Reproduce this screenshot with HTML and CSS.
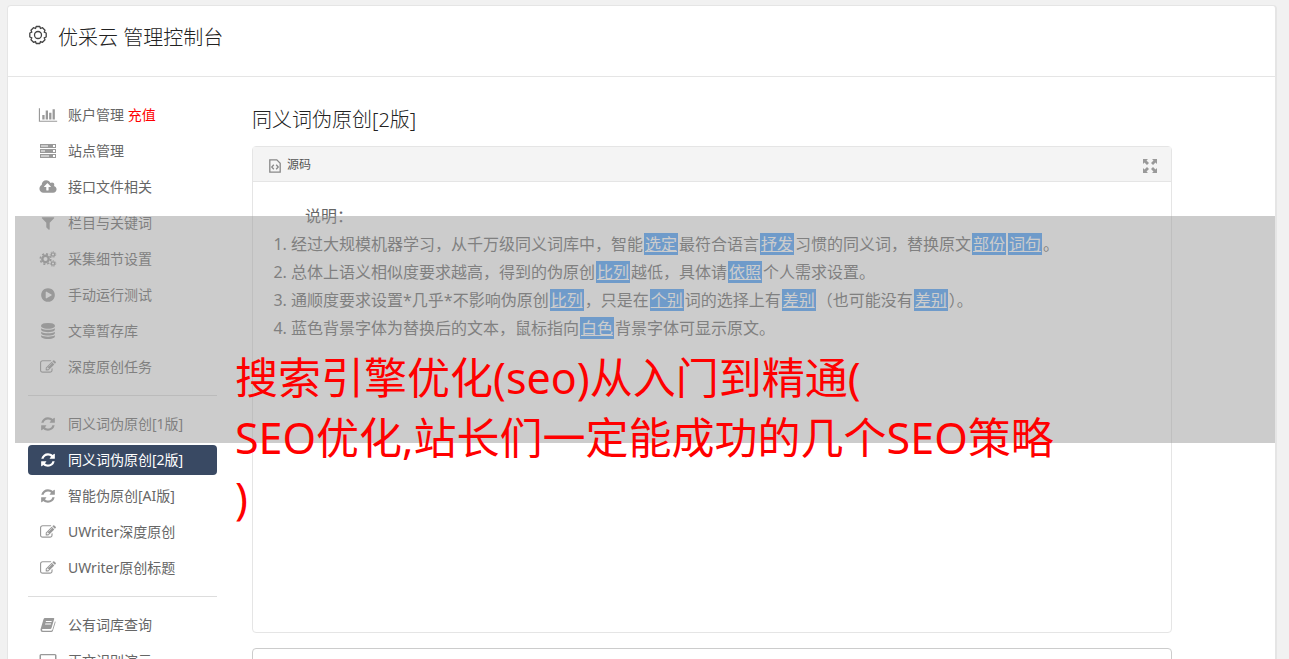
FILE: index.html
```html
<!DOCTYPE html>
<html lang="zh-CN">
<head>
  <meta charset="UTF-8">
  <meta name="viewport" content="width=device-width, initial-scale=1.0">
  <title>优采云 管理控制台</title>
  <link rel="stylesheet" href="styles.css">
</head>
<body>
  <svg class="sprite" aria-hidden="true">
    <symbol id="i-refresh" viewBox="0 0 1792 1792"><path d="M1639 1056q0 5-1 7-64 268-268 434.5t-478 166.5q-146 0-282.5-55t-243.5-157l-129 129q-19 19-45 19t-45-19-19-45v-448q0-26 19-45t45-19h448q26 0 45 19t19 45-19 45l-137 137q71 66 161 102t187 36q134 0 250-65t186-179q11-17 53-117 8-23 30-23h192q13 0 22.5 9.5t9.5 22.5zm25-800v448q0 26-19 45t-45 19h-448q-26 0-45-19t-19-45 19-45l138-138q-148-137-349-137-134 0-250 65t-186 179q-11 17-53 117-8 23-30 23h-199q-13 0-22.5-9.5t-9.5-22.5v-7q65-268 270-434.5t480-166.5q146 0 284 55.5t245 156.5l130-129q19-19 45-19t45 19 19 45z"/></symbol>
    <symbol id="i-edit" viewBox="0 0 1792 1792"><path d="M888 1184l116-116-152-152-116 116v56h96v96h56zm440-720q-16-16-33 1l-350 350q-17 17-1 33t33-1l350-350q17-17 1-33zm80 594v190q0 119-84.500 203.500t-203.500 84.500h-832q-119 0-203.500-84.500t-84.500-203.500v-832q0-119 84.500-203.500t203.500-84.500h832q63 0 117 25 15 7 18 23 3 17-9 29l-49 49q-14 14-32 8-23-6-45-6h-832q-66 0-113 47t-47 113v832q0 66 47 113t113 47h832q66 0 113-47t47-113v-126q0-13 9-22l64-64q15-15 35-7t20 29zm-96-738l288 288-672 672h-288v-288zm444 132l-92 92-288-288 92-92q28-28 68-28t68 28l152 152q28 28 28 68t-28 68z"/></symbol>
  </svg>

  <div class="card">
    <header class="card-header">
      <svg class="gear" viewBox="0 0 20 20"><path d="M8.200 1.500h3.600l.7 2 2-.8 2.500 2.500-.8 2 2 .8v4l-2 .8.800 2-2.500 2.500-2-.8-.7 2H8.200l-.7-2-2 .8L3 14.800l.8-2-2-.8V8l2-.8-.8-2 2.500-2.500 2 .8z"/><circle cx="10" cy="10" r="3.500"/></svg>
      <h1>优采云 管理控制台</h1>
    </header>

    <div class="layout">
      <nav class="sidebar">
        <a href="#"><svg class="icon wide" viewBox="0 0 2048 1792"><path d="M640 896v512h-256v-512h256zm384-512v1024h-256v-1024h256zm1024 1152v128h-2048v-1536h128v1408h1920zm-640-896v768h-256v-768h256zm384-384v1152h-256v-1152h256z"/></svg><span>账户管理 <em>充值</em></span></a>
        <a href="#"><svg class="icon wide" viewBox="0 0 18 16"><path fill-rule="evenodd" d="M1 1h16v4H1zM2 2.500v1h7v-1zM14 2v2h2V2zM1 6h16v4H1zM2 7.500v1h4v-1zM14 7v2h2V7zM1 11h16v4H1zM2 12.500v1h8v-1zM14 12v2h2v-2z"/></svg><span>站点管理</span></a>
        <a href="#"><svg class="icon wide" viewBox="-64 0 1920 1792"><path d="M1216 864q0-14-9-23l-352-352q-9-9-23-9t-23 9l-351 351q-10 12-10 24 0 14 9 23t23 9h224v352q0 13 9.500 22.500t22.500 9.500h192q13 0 22.500-9.500t9.500-22.500v-352h224q13 0 22.500-9.500t9.500-22.500zm640 288q0 159-112.500 271.500t-271.500 112.500h-1088q-185 0-316.500-131.500t-131.500-316.500q0-130 70-240t188-165q-2-30-2-43 0-212 150-362t362-150q156 0 285.500 87t188.500 231q71-62 166-62 106 0 181 75t75 181q0 76-41 138 130 31 213.500 135.500t83.500 238.500z"/></svg><span>接口文件相关</span></a>
        <a href="#"><svg class="icon" viewBox="0 0 1792 1792"><path d="M1595 295q17 41-14 70l-493 493v742q0 42-39 59-13 5-25 5-27 0-45-19l-256-256q-19-19-19-45v-486l-493-493q-31-29-14-70 17-39 59-39h1280q42 0 59 39z"/></svg><span>栏目与关键词</span></a>
        <a href="#"><svg class="icon wide" viewBox="0 0 18 16"><g class="cog"><circle cx="6.500" cy="8" r="3.200" stroke-width="2.400"/><circle cx="6.500" cy="8" r="5.200" stroke-width="1.600" stroke-dasharray="2.040 2.040"/><circle cx="14" cy="3.500" r="1.700" stroke-width="1.300"/><circle cx="14" cy="3.500" r="2.800" stroke-width="1" stroke-dasharray="1.250 1.260"/><circle cx="14" cy="12.500" r="1.700" stroke-width="1.300"/><circle cx="14" cy="12.500" r="2.800" stroke-width="1" stroke-dasharray="1.250 1.260"/></g></svg><span>采集细节设置</span></a>
        <a href="#"><svg class="icon" viewBox="0 0 1792 1792"><path d="M896 128q209 0 385.500 103t279.500 279.500 103 385.500-103 385.500-279.500 279.500-385.500 103-385.500-103-279.500-279.500-103-385.500 103-385.500 279.500-279.500 385.500-103zm384 823q32-18 32-55t-32-55l-544-320q-31-19-64-1-32 19-32 56v640q0 37 32 56 16 8 32 8 17 0 32-9z"/></svg><span>手动运行测试</span></a>
        <a href="#"><svg class="icon" viewBox="0 0 1792 1792"><path d="M896 768q237 0 443-43t325-127v170q0 69-103 128t-280 93.500-385 34.500-385-34.500-280-93.500-103-128v-170q119 84 325 127t443 43zm0 768q237 0 443-43t325-127v170q0 69-103 128t-280 93.500-385 34.500-385-34.500-280-93.500-103-128v-170q119 84 325 127t443 43zm0-384q237 0 443-43t325-127v170q0 69-103 128t-280 93.500-385 34.500-385-34.500-280-93.500-103-128v-170q119 84 325 127t443 43zm0-1152q208 0 385 34.500t280 93.500 103 128v128q0 69-103 128t-280 93.500-385 34.500-385-34.500-280-93.500-103-128v-128q0-69 103-128t280-93.500 385-34.500z"/></svg><span>文章暂存库</span></a>
        <a href="#"><svg class="icon"><use href="#i-edit"/></svg><span>深度原创任务</span></a>
        <hr>
        <a href="#"><svg class="icon"><use href="#i-refresh"/></svg><span>同义词伪原创[1版]</span></a>
        <a href="#" class="active"><svg class="icon"><use href="#i-refresh"/></svg><span>同义词伪原创[2版]</span></a>
        <a href="#"><svg class="icon"><use href="#i-refresh"/></svg><span>智能伪原创[AI版]</span></a>
        <a href="#"><svg class="icon"><use href="#i-edit"/></svg><span>UWriter深度原创</span></a>
        <a href="#"><svg class="icon"><use href="#i-edit"/></svg><span>UWriter原创标题</span></a>
        <hr>
        <a href="#"><svg class="icon" viewBox="0 0 16 16"><path fill-rule="evenodd" d="M5 1h8.500q1 0 .7 1l-2.700 9q-.3 1-1.300 1H2.800q-1 0-.8 1 .1.700 1 .7h8q1 0 1.400-1L15 4.200q.8.400.5 1.300l-2.600 8.300q-.4 1.200-1.600 1.200H2.600Q.5 15 .5 12.800q0-.6.200-1L3.500 2.200Q3.900 1 5 1zM6 4l-.3 1h5.800l.3-1zM5.300 6.500l-.3 1h5.800l.3-1z"/></svg><span>公有词库查询</span></a>
        <a href="#"><svg class="icon wide" viewBox="0 0 18 16"><path fill-rule="evenodd" d="M2 1h14q1.500 0 1.500 1.500v9Q17.500 13 16 13h-5v1.500h1.500v1h-7v-1H7V13H2Q.5 13 .5 11.500v-9Q.5 1 2 1zM2 2.200v8h14v-8z"/></svg><span>正文识别演示</span></a>
      </nav>

      <main class="content">
        <h2>同义词伪原创[2版]</h2>
        <section class="editor">
          <div class="toolbar">
            <button type="button" class="source">
              <svg viewBox="0 0 12 14"><path d="M.8.800h7l3.400 3.400v9H.8z"/><path d="M4.800 5.800L2.800 8l2 2.200M7.200 5.800l2 2.200-2 2.200"/></svg>
              源码
            </button>
            <button type="button" class="fullscreen" aria-label="全屏">
              <svg viewBox="0 0 14 14"><path d="M0 0h5L3.500 1.500 6 4 4 6 1.500 3.500 0 5zM14 0v5l-1.500-1.500L10 6 8 4l2.500-2.500L9 0zM0 14V9l1.500 1.500L4 8l2 2-2.500 2.500L5 14zM14 14H9l1.500-1.500L8 10l2-2 2.500 2.500L14 9z"/></svg>
            </button>
          </div>
          <div class="editor-body">
            <p>说明：</p>
            <ol>
              <li>经过大规模机器学习，从千万级同义词库中，智能<a href="#">选定</a>最符合语言<a href="#">抒发</a>习惯的同义词，替换原文<a href="#">部份</a><a href="#">词句</a>。</li>
              <li>总体上语义相似度要求越高，得到的伪原创<a href="#">比列</a>越低，具体请<a href="#">依照</a>个人需求设置。</li>
              <li>通顺度要求设置*几乎*不影响伪原创<a href="#">比列</a>，只是在<a href="#">个别</a>词的选择上有<a href="#">差别</a>（也可能没有<a href="#">差别</a>）。</li>
              <li>蓝色背景字体为替换后的文本，鼠标指向<a href="#">白色</a>背景字体可显示原文。</li>
            </ol>
          </div>
        </section>
        <textarea class="output" aria-label="原文"></textarea>
      </main>
    </div>
  </div>

  <div class="banner">
    <p>搜索引擎优化(seo)从入门到精通(<br>SEO优化,站长们一定能成功的几个SEO策略<br>)</p>
  </div>
</body>
</html>
```
FILE: styles.css
```css
* {
  box-sizing: border-box;
}
body {
  margin: 0;
  padding: 5px 12px 0 7px;
  height: 100vh;
  overflow: hidden;
  position: relative;
  background-color: #f1f1f1;
  color: #666;
  font-family: "Noto Sans", "Noto Sans CJK SC", sans-serif;
  font-size: 14px;
}
h1, h2, p, ol {
  margin: 0;
  padding: 0;
}
h1, h2 {
  color: #222;
  font-size: 20px;
  font-weight: 300;
  line-height: 30px;
}
button {
  border: none;
  background: none;
  padding: 0;
  cursor: pointer;
}
.sprite {
  display: none;
}
.card {
  background-color: #fff;
  border: 1px solid #e5e5e5;
  border-right-width: 2px;
  border-radius: 4px;
  min-height: 800px;
}
.card-header {
  display: flex;
  gap: 10px;
  height: 71px;
  padding: 17px 20px;
  border-bottom: 1px solid #e5e5e5;
}
.gear {
  width: 20px;
  height: 20px;
  margin-top: 2px;
  fill: none;
  stroke: #444;
  stroke-width: 1.3;
  stroke-linejoin: round;
}
.layout {
  display: flex;
  gap: 35px;
  padding: 23px 20px;
}

/* sidebar */
.sidebar {
  display: flex;
  flex-direction: column;
  flex: 0 0 189px;
  gap: 6px;
}
.sidebar a {
  display: flex;
  align-items: center;
  gap: 10px;
  height: 30px;
  padding-left: 10px;
  border-radius: 4px;
  color: #666;
  text-decoration: none;
  line-height: 30px;
}
.sidebar em {
  color: #f00;
  font-style: normal;
}
.sidebar hr {
  width: 100%;
  margin: 7px 0;
  border: none;
  border-top: 1px solid #ddd;
}
.sidebar .active {
  background-color: #394963;
  color: #fff;
}
.icon {
  width: 20px;
  height: 16px;
  fill: #999;
}
.active .icon {
  fill: #fff;
}
.cog {
  fill: none;
  stroke: #999;
}

/* editor */
.content {
  flex: 1;
  max-width: 920px;
}
.content h2 {
  margin: 5px 0 11px;
}
.editor {
  height: 487px;
  border: 1px solid #e5e5e5;
  border-radius: 4px;
}
.toolbar {
  display: flex;
  justify-content: space-between;
  align-items: center;
  height: 35px;
  padding: 0 14px 0 16px;
  background-color: #f4f4f4;
  border-bottom: 1px solid #e5e5e5;
}
.source {
  display: flex;
  align-items: center;
  gap: 6px;
  color: #555;
  font-family: inherit;
  font-size: 12px;
}
.source svg {
  width: 12px;
  height: 14px;
  margin-top: 3px;
  fill: none;
  stroke: #888;
  stroke-width: 1.3;
}
.fullscreen svg {
  display: block;
  width: 14px;
  height: 14px;
  margin-top: 4px;
  fill: #999;
}
.editor-body {
  padding: 20px;
  font-size: 16px;
  line-height: 28px;
}
.editor-body p {
  text-indent: 32px;
}
.editor-body ol {
  padding-left: 18px;
}
.editor-body a {
  margin: 0 1px;
  padding: 0 1px;
  background-color: #459dfb;
  color: #fff;
}
.output {
  display: block;
  width: 100%;
  height: 120px;
  margin-top: 15px;
  border: 1px solid #ccc;
  border-radius: 4px;
  resize: none;
}

/* translucent strip over the page */
.banner {
  position: absolute;
  top: 216px;
  left: 15px;
  right: 14px;
  height: 227px;
  padding: 132px 0 0 220px;
  background-color: rgba(153, 153, 153, 0.5);
  color: #f00;
  font-size: 43px;
  line-height: 60px;
  white-space: nowrap;
}
```
